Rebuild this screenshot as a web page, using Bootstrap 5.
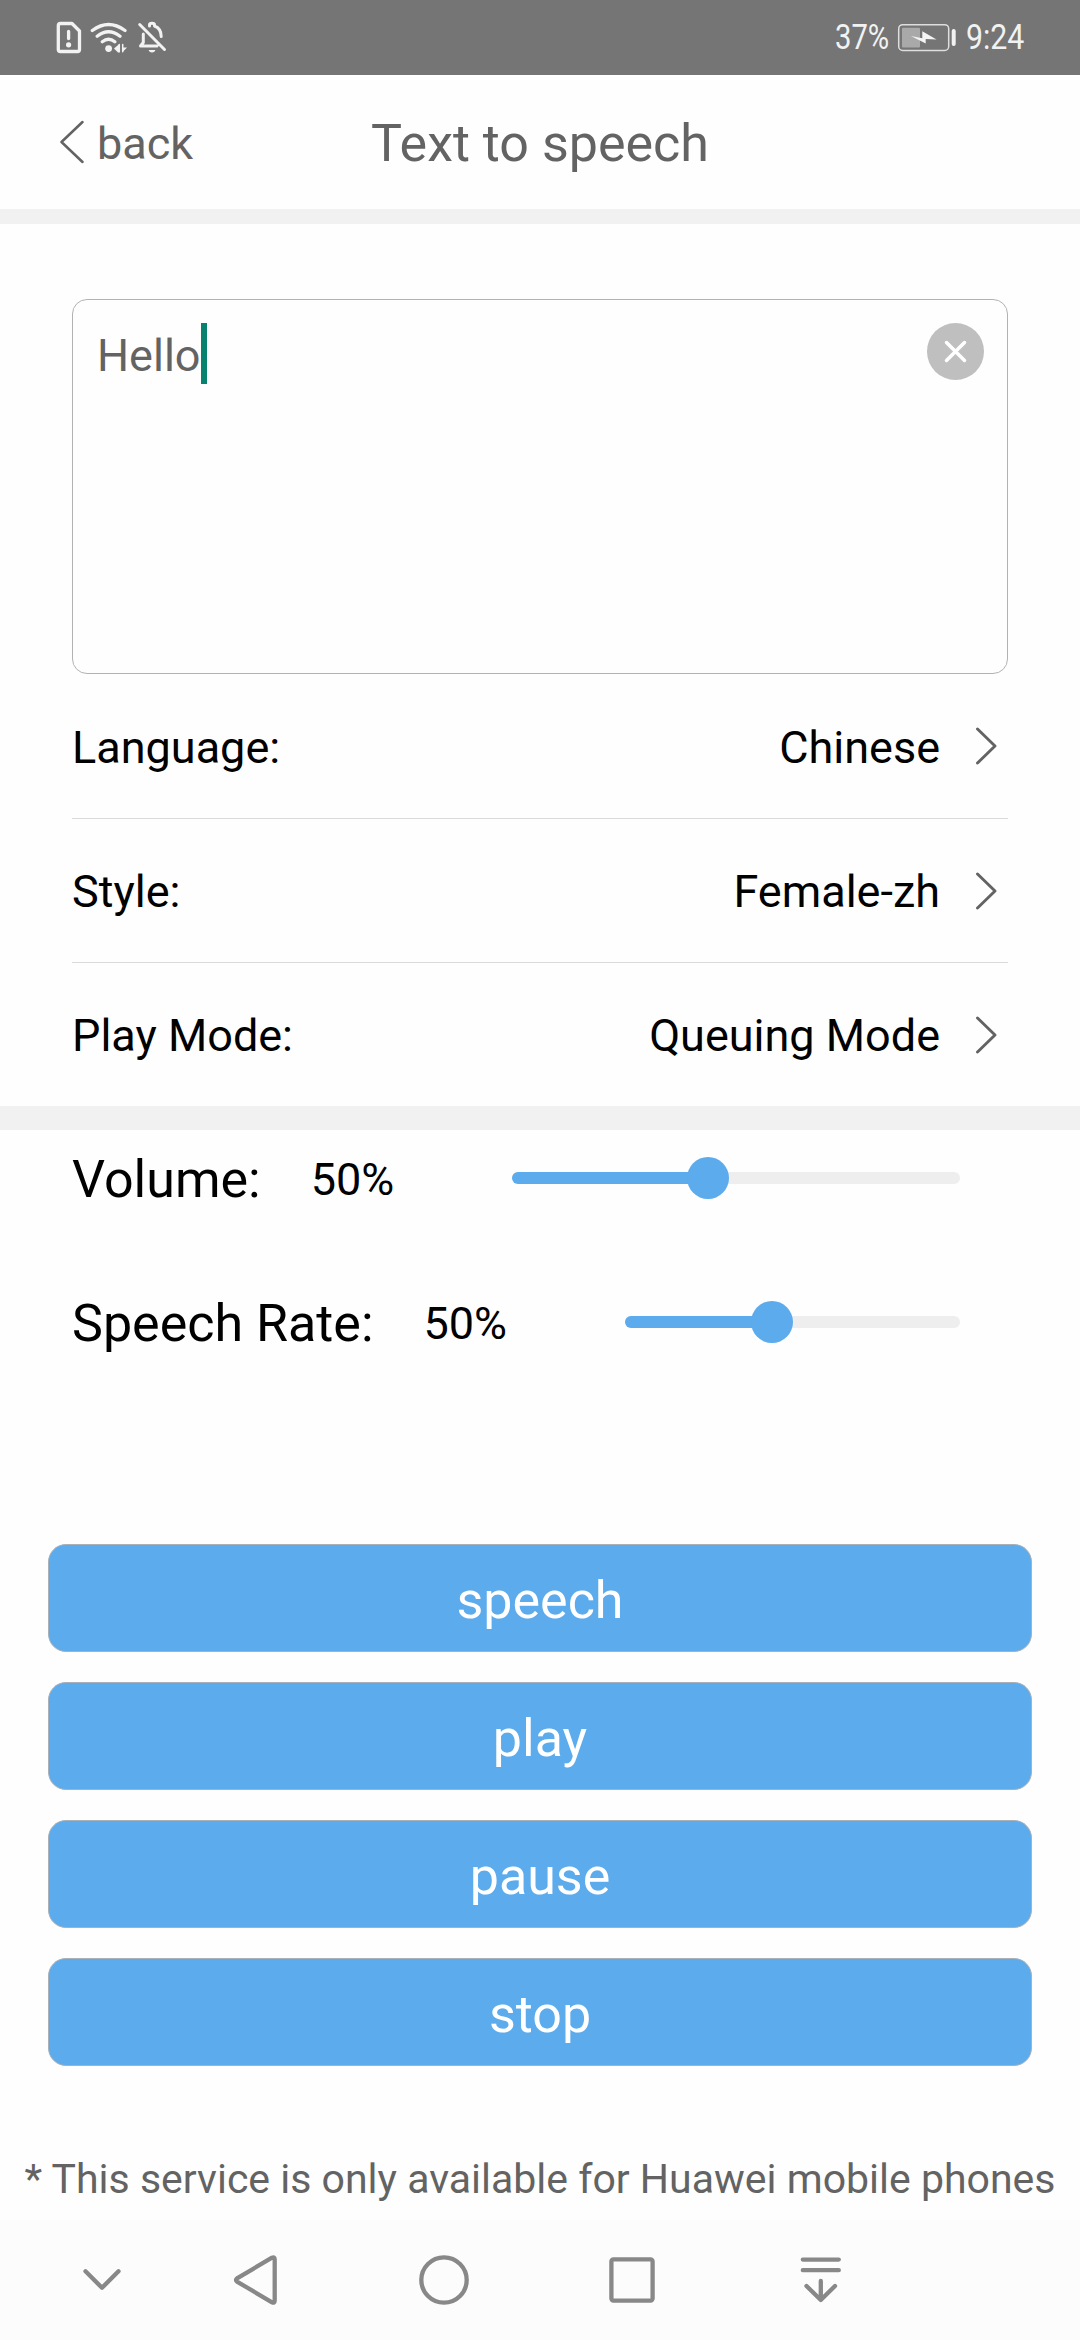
<!DOCTYPE html>
<html lang="en">
<head>
<meta charset="utf-8">
<meta name="viewport" content="width=device-width, initial-scale=1">
<title>Text to speech</title>
<link href="https://cdn.jsdelivr.net/npm/bootstrap@5.3.0/dist/css/bootstrap.min.css" rel="stylesheet">
<style>
  body { font-family: Roboto, "Liberation Sans", sans-serif; font-size: 45px; line-height: 54px; color: #000; background: #fefefe; width: 1080px; height: 2340px; overflow: hidden; }
  svg { display: block; flex: none; }
  .status-bar { height: 75px; background: #757575; color: #f2f2f2; font-size: 35px; line-height: 40px; padding: 0 56px; }
  .status-num { display: block; transform-origin: left center; white-space: nowrap; padding-top: 1px; }
  .pct { width: 53px; transform: scaleX(.835); margin-left: -1px; }
  .clock { width: 58px; transform: scaleX(.865); }
  .title-bar { height: 135px; color: #636363; padding: 0 60px; }
  .title-bar > * { flex: 1 1 0; }
  .page-title { font-size: 52px; line-height: 60px; font-weight: 400; white-space: nowrap; padding-top: 3px; }
  .back-link { color: #636363; gap: 13px; }
  .divider-top { height: 15px; background: #f1f1f1; }
  .divider-mid { height: 24px; background: #f1f1f1; }
  .form-area { padding: 75px 72px 0; }
  .speech-input { height: 375px; border: 1px solid #b2b2b2; border-radius: 15px; padding: 23px 23px 0 24px; color: #636363; }
  .caret-bar { width: 6px; height: 61px; background: #07826f; }
  .setting { height: 144px; border-bottom: 1px solid #dadada; }
  .setting:first-child { height: 145px; }
  .setting:last-child { height: 143px; border: 0; }
  .setting span { padding-top: 3px; }
  .setting svg { margin: 0 11px 0 35px; }
  .slider-row { height: 96px; padding: 0 120px 0 72px; }
  .slider-label { font-size: 52px; line-height: 60px; padding-top: 3px; }
  .slider-value { margin-left: 50px; margin-right: 118px; padding-top: 3px; }
  .track { height: 12px; border-radius: 6px; background: #eee; }
  .track .progress-bar { background: #5cabed; }
  .thumb { width: 42px; height: 42px; background: #5cabed; }
  .actions { padding: 174px 48px 0; gap: 30px; }
  .actions .btn { height: 108px; border: 1px solid #a9b0b7; border-radius: 18px; background: #5cabed; color: #fff; font-size: 52px; line-height: 60px; padding: 5px 0 0; }
  .notice { color: #636363; font-size: 41px; line-height: 48px; white-space: nowrap; height: 154px; padding-top: 89px; }
  .nav-keys { height: 120px; background: #fcfcfc; padding-left: 72px; gap: 128px; }
  .nav-keys svg:first-child { margin-right: -34px; }
</style>
<script src="https://cdn.jsdelivr.net/npm/bootstrap@5.3.0/dist/js/bootstrap.bundle.min.js"></script>
</head>
<body class="d-flex flex-column">

<header class="status-bar d-flex align-items-center justify-content-between">
  <svg width="112" height="35" viewBox="56 20 112 35" fill="none" stroke="#f2f2f2" stroke-width="3.3" stroke-linecap="round" stroke-linejoin="round">
    <path d="M60.5 23.5H72L79.5 31V49.5Q79.5 51.5 77.5 51.5H60.5Q58.3 51.5 58.3 49.5V25.7Q58.3 23.5 60.5 23.5Z"/>
    <path d="M68.6 31.5V38.5"/><circle cx="68.6" cy="44.8" r="2.6" fill="#f2f2f2" stroke="none"/>
    <path d="M92.3 30.5Q108.6 18.5 125 30.5M97.2 36.2Q108.6 27.2 120 36.2M102.3 41.8Q108.6 36.8 114.8 41.8"/>
    <circle cx="108.6" cy="48.6" r="3.4" fill="#f2f2f2" stroke="none"/>
    <path d="M119.3 44V52.5H118L114 48.5Z M122.7 44.5V52L127 47.5H122.7Z" fill="#f2f2f2" stroke="none"/>
    <path d="M119.3 44.5V51.8M122.7 44.5V51.8" stroke-width="1.5"/>
    <path d="M139.7 24.5L164.5 49.5M143.3 34V42.5L140.5 46H157M149.5 26V25Q149.5 23.2 152 23.2T154.5 25V26Q161.2 28.5 161.2 36.5" stroke-width="3"/>
    <path d="M148.5 50H155.5Q154.5 52.6 152 52.6T148.5 50Z" fill="#f2f2f2" stroke="none"/>
  </svg>
  <div class="d-flex align-items-center">
    <span class="status-num pct">37%</span>
    <svg class="ms-2 me-2" width="62" height="30" viewBox="896 22 62 30">
      <rect x="898.7" y="24.7" width="50" height="25.7" rx="4" fill="none" stroke="#dedede" stroke-width="1.5"/>
      <rect x="902" y="27.7" width="18" height="19.7" rx="1" fill="#a9a9a9"/>
      <path d="M911 36L922.3 38.2V31.2L936.5 39.5L925.7 39V43.5Z" fill="#f4f4f4"/>
      <rect x="951.7" y="29" width="4" height="17" rx="2" fill="#f2f2f2"/>
    </svg>
    <span class="status-num clock">9:24</span>
  </div>
</header>

<nav class="title-bar d-flex align-items-center">
  <a class="back-link d-flex align-items-center text-decoration-none" href="#">
    <svg width="24" height="44" viewBox="0 0 24 44" fill="none" stroke="#636363" stroke-width="2.5" stroke-linecap="round" stroke-linejoin="round"><path d="M22.5 2L1.5 22L22.5 42"/></svg>
    <span class="pt-1">back</span>
  </a>
  <h1 class="page-title text-center m-0">Text to speech</h1>
  <span></span>
</nav>
<div class="divider-top"></div>

<main>
  <section class="form-area">
    <div class="speech-input d-flex justify-content-between align-items-start">
      <div class="d-flex align-items-center"><span class="pt-1">Hello</span><i class="caret-bar"></i></div>
      <svg width="57" height="57" viewBox="0 0 57 57"><circle cx="28.5" cy="28.5" r="28.5" fill="#bfbfbf"/><path d="M19.5 19.5L37.5 37.5M37.5 19.5L19.5 37.5" stroke="#fff" stroke-width="3.5" stroke-linecap="round"/></svg>
    </div>
    <div>
      <div class="setting d-flex align-items-center"><span>Language:</span><span class="ms-auto">Chinese</span>
        <svg width="22" height="38" viewBox="0 0 22 38" fill="none" stroke="#636363" stroke-width="2.9" stroke-linecap="round" stroke-linejoin="round"><path d="M2.5 2L20 19L2.5 36"/></svg></div>
      <div class="setting d-flex align-items-center"><span>Style:</span><span class="ms-auto">Female-zh</span>
        <svg width="22" height="38" viewBox="0 0 22 38" fill="none" stroke="#636363" stroke-width="2.9" stroke-linecap="round" stroke-linejoin="round"><path d="M2.5 2L20 19L2.5 36"/></svg></div>
      <div class="setting d-flex align-items-center"><span>Play Mode:</span><span class="ms-auto">Queuing Mode</span>
        <svg width="22" height="38" viewBox="0 0 22 38" fill="none" stroke="#636363" stroke-width="2.9" stroke-linecap="round" stroke-linejoin="round"><path d="M2.5 2L20 19L2.5 36"/></svg></div>
    </div>
  </section>
  <div class="divider-mid"></div>

  <section class="d-flex flex-column gap-5">
    <div class="slider-row d-flex align-items-center">
      <span class="slider-label">Volume:</span><span class="slider-value">50%</span>
      <div class="position-relative flex-grow-1">
        <div class="progress track"><div class="progress-bar" style="width:43.75%"></div></div>
        <div class="thumb rounded-circle position-absolute top-50 translate-middle" style="left:43.75%"></div>
      </div>
    </div>
    <div class="slider-row d-flex align-items-center">
      <span class="slider-label">Speech Rate:</span><span class="slider-value">50%</span>
      <div class="position-relative flex-grow-1">
        <div class="progress track"><div class="progress-bar" style="width:43.75%"></div></div>
        <div class="thumb rounded-circle position-absolute top-50 translate-middle" style="left:43.75%"></div>
      </div>
    </div>
  </section>

  <section class="actions d-flex flex-column">
    <button class="btn" type="button">speech</button>
    <button class="btn" type="button">play</button>
    <button class="btn" type="button">pause</button>
    <button class="btn" type="button">stop</button>
  </section>
  <p class="notice text-center m-0">* This service is only available for Huawei mobile phones</p>
</main>

<footer class="nav-keys d-flex align-items-center mt-auto">
  <svg width="60" height="60" viewBox="72 2250 60 60" fill="none" stroke="#888" stroke-width="4.3" stroke-linecap="round" stroke-linejoin="round"><path d="M85.5 2271.3L102 2287.8L118.5 2271.3"/></svg>
  <svg width="60" height="60" viewBox="226 2250 60 60" fill="none" stroke="#888" stroke-width="4.3" stroke-linejoin="round"><path d="M272 2257.7Q274.7 2256.5 274.7 2259.5V2300.5Q274.7 2303.5 272 2302.3L237 2281.6Q235 2280 237 2278.4Z"/></svg>
  <svg width="60" height="60" viewBox="414 2250 60 60" fill="none" stroke="#888" stroke-width="4.3"><circle cx="444" cy="2280" r="22.7"/></svg>
  <svg width="60" height="60" viewBox="602 2250 60 60" fill="none" stroke="#888" stroke-width="4.3"><rect x="611.4" y="2259.4" width="41.2" height="41.2" rx="2"/></svg>
  <svg width="60" height="60" viewBox="790 2250 60 60" fill="none" stroke="#888" stroke-width="4.3" stroke-linecap="round" stroke-linejoin="round"><path d="M802.8 2259.6H838.8M802.8 2270.2H838.8M820.8 2281V2300M806.5 2286L820.8 2300L835 2286"/></svg>
</footer>
</body>
</html>
